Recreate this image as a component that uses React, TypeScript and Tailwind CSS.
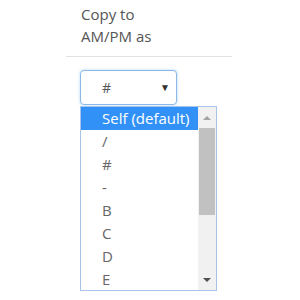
const options = ["Self (default)", "/", "#", "-", "B", "C", "D", "E"];

export default function App() {
  return (
    <div className="h-[300px] w-[300px] bg-white" style={{fontFamily: '"Open Sans", "Noto Sans", sans-serif'}}>
      <div className="ml-[66px] w-[166px] pt-[3px]">
        <div className="pl-[15px] text-[15px] leading-[22px] text-[#555]">
          <div>Copy to</div>
          <div>AM/PM as</div>
        </div>
        <div className="mt-[9px] h-px bg-[#e2e2e2]" />
        <div className="ml-[14px] mt-[13px]">
          {/* Select */}
          <div className="flex h-[35px] w-[97px] items-center justify-between rounded-[4px] border border-[#8cb8e8] bg-white pl-[21px] pr-[6px] text-[14px] text-[#555] shadow-[0_0_3px_rgba(102,175,233,0.5)]">
            <span>#</span>
            <span className="text-[10px] text-[#333]">▼</span>
          </div>
          {/* Dropdown list */}
          <div className="mt-px flex h-[185px] w-[137px] border border-[#a9c4ea] bg-white">
            <div className="flex-1">
              {options.map((o, i) => (
                <div
                  key={o}
                  className={`flex h-[23px] items-center pl-[21px] text-[15px] ${
                    i === 0 ? "bg-[#3191f7] text-white" : "text-[#666]"
                  }`}
                >
                  {o}
                </div>
              ))}
            </div>
            {/* Scrollbar */}
            <div className="flex w-[18px] flex-col bg-[#f1f1f1]">
              <div className="flex h-[21px] items-center justify-center">
                <div className="h-0 w-0 border-x-[4px] border-b-[4px] border-x-transparent border-b-[#a3a3a3]" />
              </div>
              <div className="mx-px h-[87px] bg-[#c1c1c1]" />
              <div className="flex-1" />
              <div className="flex h-[21px] items-center justify-center">
                <div className="h-0 w-0 border-x-[4px] border-t-[4px] border-x-transparent border-t-[#505050]" />
              </div>
            </div>
          </div>
        </div>
      </div>
    </div>
  );
}
